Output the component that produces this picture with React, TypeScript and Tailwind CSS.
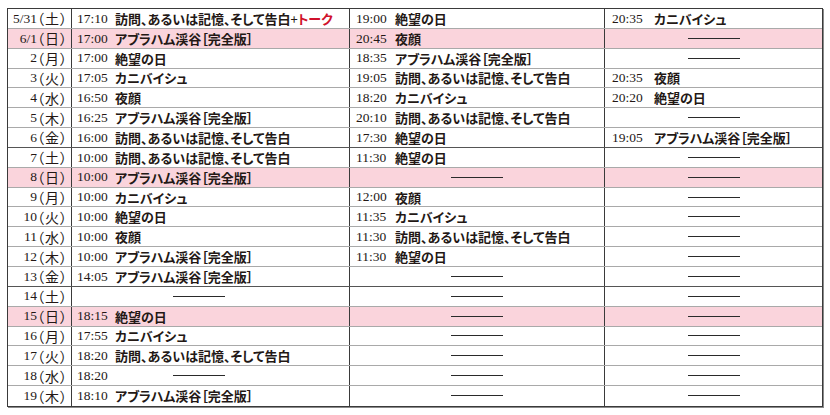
type Slot = { t?: string; title?: string; talk?: boolean } | null

type Row = { d: string; w: string; pink?: boolean; sep?: boolean; c: [Slot, Slot, Slot] }

const V = '訪問、あるいは記憶、そして告白'
const A = 'アブラハム渓谷［完全版］'
const Z = '絶望の日'
const K = 'カニバイシュ'
const Y = '夜顔'

const rows: Row[] = [
  { d: '5/31', w: '土', c: [{ t: '17:10', title: V, talk: true }, { t: '19:00', title: Z }, { t: '20:35', title: K }] },
  { d: '6/1', w: '日', pink: true, c: [{ t: '17:00', title: A }, { t: '20:45', title: Y }, null] },
  { d: '2', w: '月', c: [{ t: '17:00', title: Z }, { t: '18:35', title: A }, null] },
  { d: '3', w: '火', c: [{ t: '17:05', title: K }, { t: '19:05', title: V }, { t: '20:35', title: Y }] },
  { d: '4', w: '水', c: [{ t: '16:50', title: Y }, { t: '18:20', title: K }, { t: '20:20', title: Z }] },
  { d: '5', w: '木', c: [{ t: '16:25', title: A }, { t: '20:10', title: V }, null] },
  { d: '6', w: '金', sep: true, c: [{ t: '16:00', title: V }, { t: '17:30', title: Z }, { t: '19:05', title: A }] },
  { d: '7', w: '土', c: [{ t: '10:00', title: V }, { t: '11:30', title: Z }, null] },
  { d: '8', w: '日', pink: true, c: [{ t: '10:00', title: A }, null, null] },
  { d: '9', w: '月', c: [{ t: '10:00', title: K }, { t: '12:00', title: Y }, null] },
  { d: '10', w: '火', c: [{ t: '10:00', title: Z }, { t: '11:35', title: K }, null] },
  { d: '11', w: '水', c: [{ t: '10:00', title: Y }, { t: '11:30', title: V }, null] },
  { d: '12', w: '木', c: [{ t: '10:00', title: A }, { t: '11:30', title: Z }, null] },
  { d: '13', w: '金', sep: true, c: [{ t: '14:05', title: A }, null, null] },
  { d: '14', w: '土', c: [{}, null, null] },
  { d: '15', w: '日', pink: true, c: [{ t: '18:15', title: Z }, null, null] },
  { d: '16', w: '月', c: [{ t: '17:55', title: K }, null, null] },
  { d: '17', w: '火', c: [{ t: '18:20', title: V }, null, null] },
  { d: '18', w: '水', c: [{ t: '18:20' }, null, null] },
  { d: '19', w: '木', c: [{ t: '18:10', title: A }, null, null] },
]

const serif = "font-['Liberation_Serif','Noto_Sans_CJK_JP',serif]"
const jp = "font-['Noto_Sans_CJK_JP',sans-serif] [font-feature-settings:'palt']"

const Dash = () => <span className="block h-px w-[52px] bg-[#2a2a2a]" />

function Cell({ slot, col }: { slot: Slot; col: number }) {
  const pad = col === 0 ? 'pl-[5px]' : col === 1 ? 'pl-[6px]' : 'pl-[7px]'
  const tw = col === 0 ? 'w-[38px]' : col === 1 ? 'w-[39px]' : 'w-[42px]'
  if (!slot) {
    return (
      <div className="flex items-center justify-center">
        <Dash />
      </div>
    )
  }
  return (
    <div className={`flex items-center ${pad}`}>
      <span className={`${tw} shrink-0 text-[13.5px] text-[#231815] ${serif}`}>{slot.t}</span>
      {slot.title ? (
        <span className={`text-[13px] font-bold text-[#231815] whitespace-nowrap ${jp}`}>
          {slot.title}
          {slot.talk && (
            <>
              <span className="font-normal">+</span>
              <span className="text-[#d0112b]">トーク</span>
            </>
          )}
        </span>
      ) : (
        <span className="ml-[58px]">
          <Dash />
        </span>
      )}
    </div>
  )
}

export default function App() {
  return (
    <div className="pt-[8px] pl-[7px] bg-white min-h-[415px]">
      <div className="w-[816px] border border-[#3a3a3a] shadow-[1px_1px_0_#8a8a8a] bg-white">
        {rows.map((r, i) => (
          <div
            key={i}
            className={`grid grid-cols-[64px_278px_255px_1fr] h-[19.85px] leading-none ${
              r.pink ? 'bg-[#fad4dc]' : ''
            } ${i === rows.length - 1 ? '' : r.sep ? 'border-b border-[#555]' : 'border-b border-[#a9a9a9]'}`}
          >
            <div className="flex items-center justify-end pr-[3px] border-r border-[#3a3a3a] text-[#231815]">
              <span className={`text-[13.5px] ${serif}`}>{r.d}</span>
              <span className={`text-[14px] tracking-[1px] ${jp}`}>（{r.w}）</span>
            </div>
            <div className="border-r border-[#3a3a3a] flex">
              <div className="flex-1 flex"><Cell slot={r.c[0]} col={0} /></div>
            </div>
            <div className="border-r border-[#3a3a3a] flex">
              <div className="flex-1 grid"><Cell slot={r.c[1]} col={1} /></div>
            </div>
            <div className="grid">
              <Cell slot={r.c[2]} col={2} />
            </div>
          </div>
        ))}
      </div>
    </div>
  )
}
